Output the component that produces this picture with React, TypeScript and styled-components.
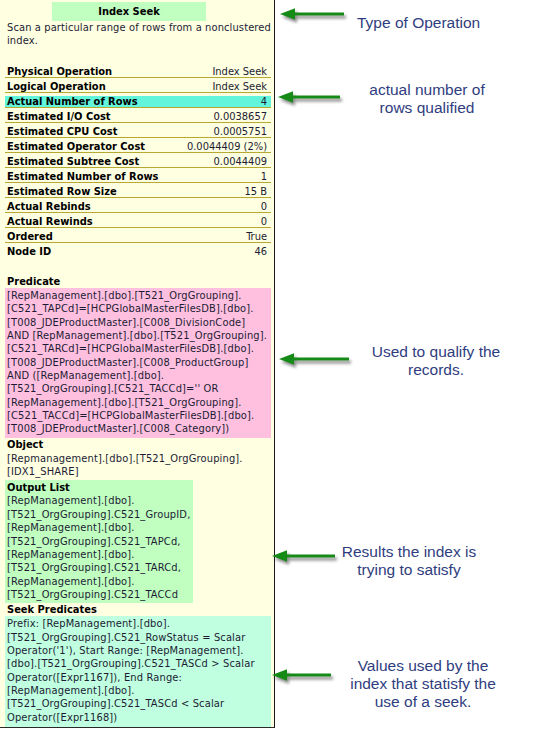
import React from "react";
import styled, { createGlobalStyle } from "styled-components";

const GlobalStyle = createGlobalStyle`
  html, body {
    margin: 0;
    padding: 0;
    background: #ffffff;
  }
  #root {
    width: 545px;
    height: 729px;
  }
`;

const props: [string, string][] = [
  ["Physical Operation", "Index Seek"],
  ["Logical Operation", "Index Seek"],
  ["Actual Number of Rows", "4"],
  ["Estimated I/O Cost", "0.0038657"],
  ["Estimated CPU Cost", "0.0005751"],
  ["Estimated Operator Cost", "0.0044409 (2%)"],
  ["Estimated Subtree Cost", "0.0044409"],
  ["Estimated Number of Rows", "1"],
  ["Estimated Row Size", "15 B"],
  ["Actual Rebinds", "0"],
  ["Actual Rewinds", "0"],
  ["Ordered", "True"],
  ["Node ID", "46"],
];

const predicate = [
  "[RepManagement].[dbo].[T521_OrgGrouping].",
  "[C521_TAPCd]=[HCPGlobalMasterFilesDB].[dbo].",
  "[T008_JDEProductMaster].[C008_DivisionCode]",
  "AND [RepManagement].[dbo].[T521_OrgGrouping].",
  "[C521_TARCd]=[HCPGlobalMasterFilesDB].[dbo].",
  "[T008_JDEProductMaster].[C008_ProductGroup]",
  "AND ([RepManagement].[dbo].",
  "[T521_OrgGrouping].[C521_TACCd]='' OR",
  "[RepManagement].[dbo].[T521_OrgGrouping].",
  "[C521_TACCd]=[HCPGlobalMasterFilesDB].[dbo].",
  "[T008_JDEProductMaster].[C008_Category])",
];

const objectLines = ["[Repmanagement].[dbo].[T521_OrgGrouping].", "[IDX1_SHARE]"];

const outputList = [
  "[RepManagement].[dbo].",
  "[T521_OrgGrouping].C521_GroupID,",
  "[RepManagement].[dbo].",
  "[T521_OrgGrouping].C521_TAPCd,",
  "[RepManagement].[dbo].",
  "[T521_OrgGrouping].C521_TARCd,",
  "[RepManagement].[dbo].",
  "[T521_OrgGrouping].C521_TACCd",
];

const seekPredicates = [
  "Prefix: [RepManagement].[dbo].",
  "[T521_OrgGrouping].C521_RowStatus = Scalar",
  "Operator('1'), Start Range: [RepManagement].",
  "[dbo].[T521_OrgGrouping].C521_TASCd > Scalar",
  "Operator([Expr1167]), End Range:",
  "[RepManagement].[dbo].",
  "[T521_OrgGrouping].C521_TASCd < Scalar",
  "Operator([Expr1168])",
];

// arrow tip x / centre y, shaft length
const arrows = [
  { x: 280, y: 14, len: 66 },
  { x: 278, y: 97, len: 64 },
  { x: 279, y: 359, len: 72 },
  { x: 272, y: 556, len: 65 },
  { x: 272, y: 675, len: 61 },
];

const notes = [
  { x: 357, y: 14, w: 160, align: "left", lines: ["Type of Operation"] },
  { x: 337, y: 81, w: 180, align: "center", lines: ["actual number of", "rows qualified"] },
  { x: 346, y: 343, w: 180, align: "center", lines: ["Used to qualify the", "records."] },
  { x: 319, y: 543, w: 180, align: "center", lines: ["Results the index is", "trying to satisfy"] },
  {
    x: 333,
    y: 657,
    w: 180,
    align: "center",
    lines: ["Values used by the", "index that statisfy the", "use of a seek."],
  },
];

const App: React.FC = () => {
  return (
    <>
      <GlobalStyle />
      <Page>
        <Panel>
          <Title>Index Seek</Title>
          <Description>
            Scan a particular range of rows from a nonclustered
            <br />
            index.
          </Description>

          <PropTable>
            {props.map(([label, value], i) => (
              <PropRow key={label} $last={i === props.length - 1}>
                <RowInner $highlight={label === "Actual Number of Rows"}>
                  <PropLabel>{label}</PropLabel>
                  <PropValue>{value}</PropValue>
                </RowInner>
              </PropRow>
            ))}
          </PropTable>

          <Heading $gap={17}>Predicate</Heading>
          <Block $bg="#ffc0e0">
            {predicate.map((l, i) => (
              <Line key={i}>{l}</Line>
            ))}
          </Block>

          <Heading $gap={0}>Object</Heading>
          <Block $bg="transparent">
            {objectLines.map((l, i) => (
              <Line key={i}>{l}</Line>
            ))}
          </Block>

          <Block $bg="#c0ffc0" $width={188}>
            <Heading $gap={0}>Output List</Heading>
            {outputList.map((l, i) => (
              <Line key={i}>{l}</Line>
            ))}
          </Block>

          <Heading $gap={0}>Seek Predicates</Heading>
          <Block $bg="#c0ffe0" $grow>
            {seekPredicates.map((l, i) => (
              <Line key={i}>{l}</Line>
            ))}
          </Block>
        </Panel>

        {arrows.map((a, i) => (
          <ArrowPin key={i} style={{ left: a.x - 2, top: a.y - 10 }}>
            <svg width={a.len + 10} height="26" viewBox={`0 0 ${a.len + 10} 26`}>
              <path
                d={`M2 10 L17 4.3 L17 8.6 L${a.len} 8.6 L${a.len} 11.6 L17 11.6 L17 15.7 Z`}
                fill="#168a16"
              />
            </svg>
          </ArrowPin>
        ))}

        {notes.map((n, i) => (
          <Note
            key={i}
            $align={n.align}
            style={{ left: n.x, top: n.y, width: n.w }}
          >
            {n.lines.map((l, j) => (
              <div key={j}>{l}</div>
            ))}
          </Note>
        ))}
      </Page>
    </>
  );
};

export default App;

const Page = styled.div`
  position: relative;
  width: 545px;
  height: 729px;
  display: flex;
  align-items: flex-start;
  background: #ffffff;
  overflow: hidden;
`;

const Panel = styled.div`
  box-sizing: border-box;
  width: 275px;
  height: 728px;
  padding: 2px 3px 0 5px;
  background: #ffffe1;
  border-right: 1px solid #1a1a1a;
  border-bottom: 1px solid #2a2a2a;
  font-family: "DejaVu Sans Condensed", "DejaVu Sans", sans-serif;
  font-stretch: condensed;
  font-size: 11px;
  color: #1c1c34;
  display: flex;
  flex-direction: column;
`;

const Title = styled.div`
  width: 154px;
  height: 19px;
  margin-left: 47px;
  background: #c0ffc0;
  color: #000;
  font-weight: bold;
  line-height: 19px;
  text-align: center;
`;

const Description = styled.div`
  line-height: 13px;
  padding-left: 2px;
  letter-spacing: 0.12px;
  white-space: nowrap;
`;

const PropTable = styled.div`
  margin-top: 16px;
  display: flex;
  flex-direction: column;
`;

const PropRow = styled.div<{ $last?: boolean }>`
  height: 14px;
  display: flex;
  align-items: center;
  border-bottom: 1px solid ${(p) => (p.$last ? "transparent" : "#b8a832")};
`;

const RowInner = styled.div<{ $highlight?: boolean }>`
  flex: 1;
  height: 11px;
  margin-top: 2px;
  padding: 0 4px 0 2px;
  display: flex;
  align-items: center;
  justify-content: space-between;
  background: ${(p) => (p.$highlight ? "#62f5dc" : "transparent")};
  line-height: 11px;
`;

const PropLabel = styled.span`
  font-weight: bold;
  color: #000;
`;

const PropValue = styled.span`
  color: #1c1c34;
`;

const Heading = styled.div<{ $gap: number }>`
  margin-top: ${(p) => p.$gap}px;
  padding-left: 2px;
  line-height: 13px;
  font-weight: bold;
  color: #000;
`;

const Block = styled.div<{ $bg: string; $width?: number; $grow?: boolean }>`
  background: ${(p) => p.$bg};
  width: ${(p) => (p.$width ? `${p.$width}px` : "auto")};
  flex: ${(p) => (p.$grow ? 1 : "none")};
  padding: 1px 0 2px;
`;

const Line = styled.div`
  padding-left: 2px;
  line-height: 13.35px;
  letter-spacing: 0.15px;
  white-space: nowrap;
`;

const ArrowPin = styled.div`
  position: absolute;
  line-height: 0;
  filter: drop-shadow(2px 3px 1.5px rgba(0, 0, 0, 0.45));
`;

const Note = styled.div<{ $align: string }>`
  position: absolute;
  font-family: "Liberation Sans", Arial, sans-serif;
  font-size: 15.5px;
  line-height: 18px;
  color: #2f3d80;
  text-align: ${(p) => p.$align};
  white-space: nowrap;
`;
